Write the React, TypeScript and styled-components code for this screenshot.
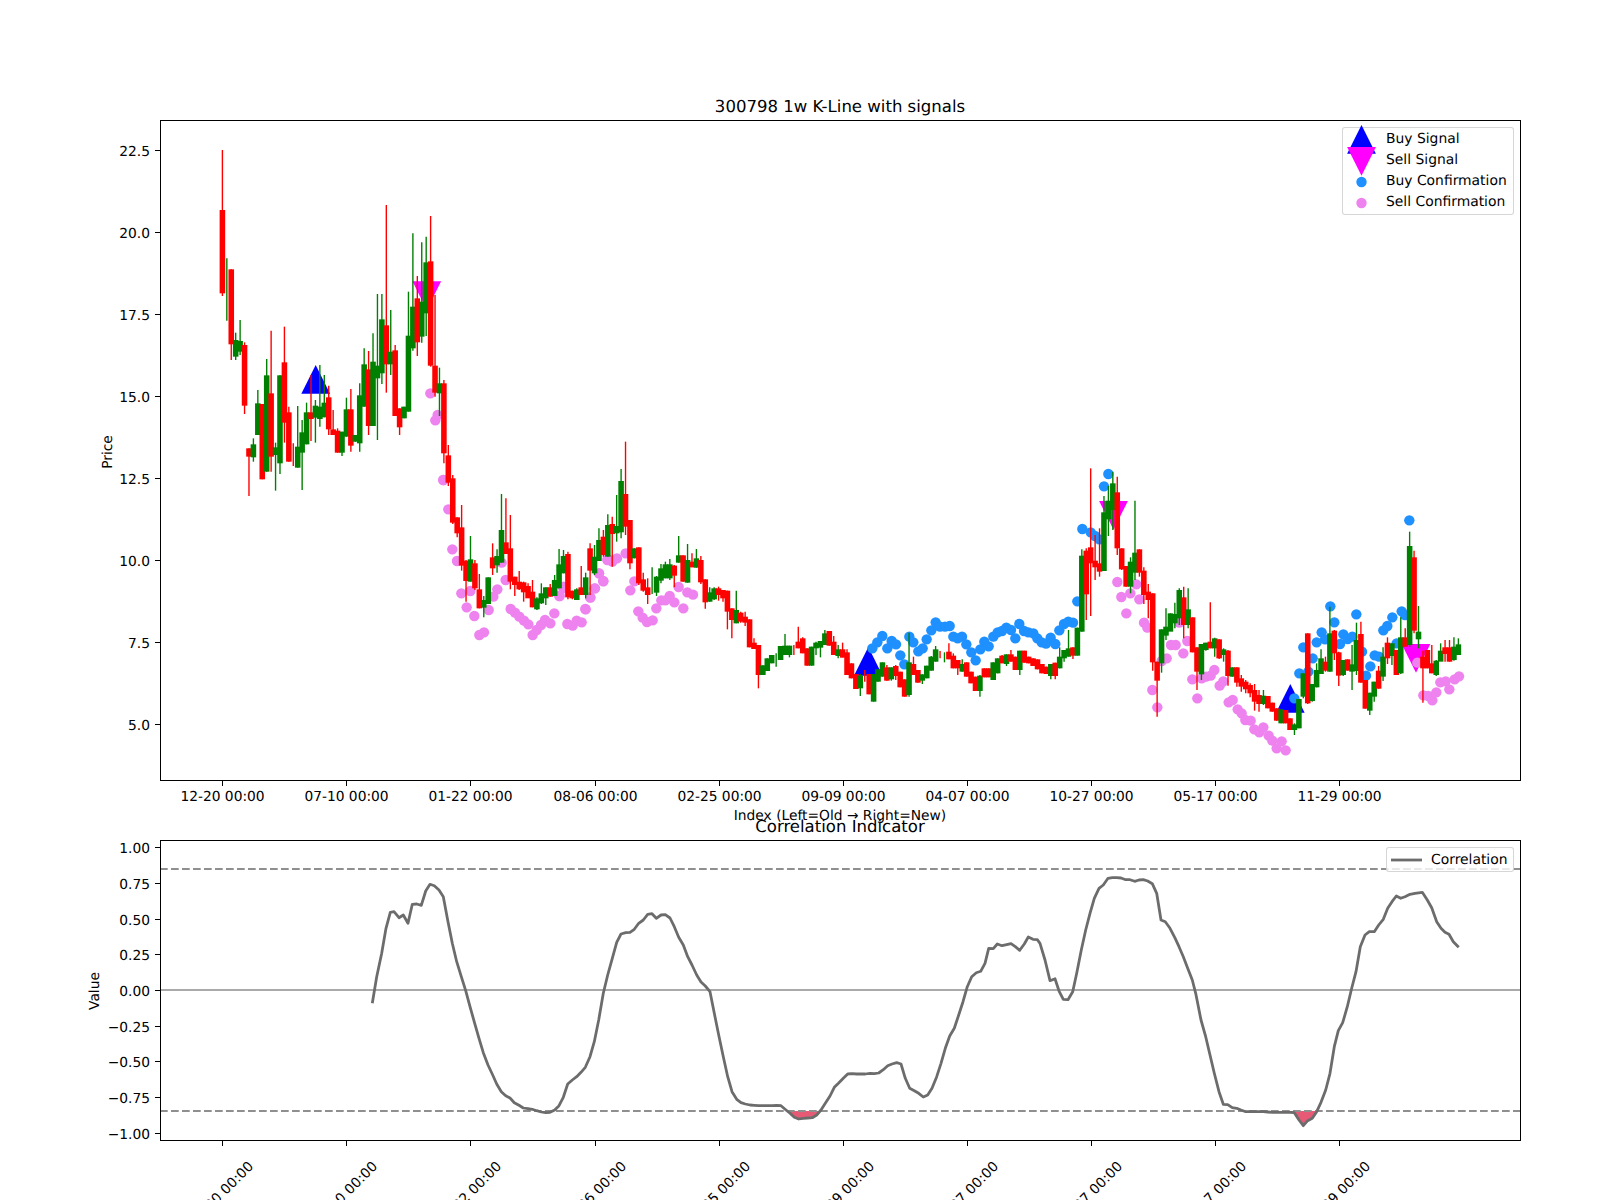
import React from 'react';
import styled, { createGlobalStyle } from 'styled-components';

const GlobalStyle = createGlobalStyle`
  html, body { margin: 0; padding: 0; background: #fff; }
`;

const FONT = `"DejaVu Sans", "Liberation Sans", sans-serif`;
const RED = '#ff0000';
const GREEN = '#008000';

const Figure = styled.div`
  width: 1600px;
  height: 1200px;
  box-sizing: border-box;
  padding: 120px 80px 60px 160px;
  display: flex;
  flex-direction: column;
  gap: 60px;
  overflow: hidden;
  background: #fff;
  font-family: ${FONT};
  text-rendering: geometricPrecision;
`;
const Axes = styled.section<{ $h: number }>`
  position: relative;
  width: 1360px;
  height: ${(p) => p.$h}px;
  flex: none;
`;
const Plot = styled.svg`
  display: block;
  width: 100%;
  height: 100%;
  overflow: visible;
`;
const TickText = styled.text`
  font-family: ${FONT};
  font-size: 13.8px;
  fill: #000;
`;
const AxisLabel = styled(TickText)`
  text-anchor: middle;
`;
const ChartTitle = styled.text`
  font-family: ${FONT};
  font-size: 16.55px;
  fill: #000;
  text-anchor: middle;
`;
const Legend = styled.div<{ $top: number; $left: number; $w: number; $h: number; $pad: number }>`
  position: absolute;
  top: ${(p) => p.$top}px;
  left: ${(p) => p.$left}px;
  width: ${(p) => p.$w}px;
  height: ${(p) => p.$h}px;
  box-sizing: border-box;
  padding-top: ${(p) => p.$pad}px;
  display: flex;
  flex-direction: column;
  border: 1px solid rgba(204, 204, 204, 0.8);
  border-radius: 3px;
  background: rgba(255, 255, 255, 0.8);
`;
const LegendRow = styled.div<{ $h: number }>`
  display: flex;
  align-items: center;
  height: ${(p) => p.$h}px;
  flex: none;
  font-size: 13.89px;
  line-height: ${(p) => p.$h}px;
  color: #000;
  white-space: nowrap;
`;
const LegendIcon = styled.svg<{ $w: number }>`
  display: block;
  width: ${(p) => p.$w}px;
  height: 20px;
  flex: none;
  overflow: visible;
`;

type Row = [number, number, number, number, number];
type Candle = { i: number; red: boolean; wt: number; wb: number; bt: number; bb: number };
const candles: Candle[] = [];
const seg = (start: number, off: number, rows: Row[]) => {
  rows.forEach((r, k) => {
    candles.push({
      i: start + k,
      red: r[0] === 1,
      wt: off + r[1] / 3,
      wb: off + r[2] / 3,
      bt: off + r[3] / 3,
      bb: off + r[4] / 3,
    });
  });
};

seg(0, 100, [
  [1,150,588,330,580],[0,475,662,0,0],[1,508,780,508,733],[0,698,780,720,770],[0,660,765,723,755],
  [1,727,942,735,917],[1,1045,1188,1045,1070],[0,1015,1085,1033,1072],[0,870,1005,910,1005],[1,912,1138,912,1138],
  [0,777,1115,826,1115],[1,692,1115,880,1070],[0,1028,1172,1042,1065],[0,826,1122,826,1090],[1,680,1028,787,968],
  [1,920,1085,937,1085],[1,1030,1098,0,0],[0,918,1103,1040,1103],[0,960,1170,997,1058],[0,908,1033,937,1033],
  [1,825,1023,937,957],[0,900,1028,917,953],[0,795,980,920,957],[0,825,952,908,952],[1,857,1005,892,988],
  [1,930,1005,988,1005],[1,985,1058,992,1058],[0,995,1068,995,1058],[0,893,1010,928,1010],[1,867,1055,928,1037],
  [0,1005,1025,1005,1025],[0,850,1055,886,1030],[0,745,920,793,920],[1,753,1005,808,978],[0,700,978,785,978],
  [0,582,1020,797,835],[0,582,852,658,820],[1,315,878,676,793],[0,630,825,755,793],[1,735,948,751,948],
  [1,925,1005,925,982],[0,920,955,920,955],[0,575,935,707,935],[0,400,752,620,745],[1,528,768,595,727],
  [0,427,728,605,710],[0,410,708,487,640],[1,348,800,484,797],[1,585,890,797,878],[0,803,948,850,880],
  [1,840,1090,850,1060],
]);
seg(51, 380, [
  [1,195,318,226,308],[1,285,432,295,428],[1,412,472,412,460],[1,375,572,442,557],[1,540,665,542,603],
  [0,468,605,538,605],[1,540,630,550,625],[1,582,685,628,685],[0,648,712,660,683],[0,592,672,592,672],
  [1,490,585,532,565],[0,508,578,528,556],[0,342,548,450,548],[1,355,522,487,522],[1,405,628,505,605],
  [1,590,648,590,615],[1,573,630,605,628],[1,605,665,607,637],[1,610,652,618,655],[1,600,682,635,682],
  [0,652,690,655,688],[0,610,672,640,670],[0,622,675,622,655],[1,612,650,622,650],[0,585,648,600,648],
  [0,507,625,553,625],[0,510,580,528,580],[1,515,658,522,652],[1,632,658,632,655],[0,625,660,628,660],
  [1,558,645,622,645],[0,578,655,592,645],[1,490,645,505,572],[0,495,585,530,580],[0,445,543,480,543],
  [1,450,530,470,525],[0,403,530,435,530],
]);
seg(88, 470, [
  [1,140,290,162,192],[0,75,215,168,190],[0,-3,205,33,187],[1,-85,195,72,170],[1,150,298,150,280],
  [0,235,265,235,265],[1,232,345,232,340],[1,308,365,328,362],[1,325,402,352,375],[0,292,372,0,0],
  [0,318,378,320,368],[0,282,340,295,332],[0,275,325,283,325],[0,267,330,283,325],[1,285,352,287,317],
  [0,198,278,256,278],[1,256,335,256,335],[0,222,338,270,338],[1,250,292,275,292],[0,237,293,265,293],
  [1,258,342,270,337],[1,328,416,328,397],[0,352,395,367,395],[0,352,390,355,388],[1,350,392,355,375],
  [1,365,395,360,385],[1,362,478,362,425],[1,415,505,415,450],[0,362,460,420,460],[1,425,458,428,455],
  [1,425,468,440,458],[1,448,532,448,532],[1,505,537,518,537],[1,525,655,525,615],[0,586,615,586,615],
  [0,565,603,565,603],[0,555,580,555,580],
]);
seg(125, 440, [[0,640,680,0,0]]);
seg(126, 580, [
  [0,198,240,198,240],[0,162,225,197,225],[0,197,232,197,225],[1,195,225,0,0],[1,140,205,185,205],
  [1,172,220,175,220],[1,205,257,205,257],[0,200,257,200,257],[0,185,225,188,205],[0,185,232,183,203],
  [0,150,195,160,195],[1,153,197,153,197],[1,168,225,185,225],[0,195,235,208,228],[1,188,232,208,233],
  [1,208,285,217,285],[1,250,295,250,295],[1,282,327,282,327],[0,282,348,287,325],[1,270,305,0,0],
  [1,282,343,282,343],[0,282,365,282,365],[0,268,305,268,305],[0,247,290,247,290],[1,255,302,262,302],
  [0,262,302,262,298],[1,255,300,258,288],[1,275,322,275,322],[1,298,350,298,350],[0,158,350,247,345],
  [1,230,285,252,285],[1,270,308,270,308],[0,283,312,283,302],[0,257,295,257,295],[0,228,272,230,272],
  [0,198,245,208,245],[1,213,235,0,0],[0,217,247,0,0],[1,190,238,215,238],[1,220,265,227,265],
  [1,240,285,240,265],[0,238,275,252,275],[1,247,290,247,290],[1,275,310,275,310],[1,290,333,290,333],
]);
seg(171, 440, [
  [0,705,770,707,753],[1,685,712,685,712],[1,685,712,685,712],[0,667,720,667,720],[0,655,700,655,700],
  [1,645,670,647,670],[0,643,678,643,672],[1,630,665,643,665],[1,650,690,650,690],[0,632,705,632,690],
  [1,632,668,632,668],[1,650,670,650,670],[1,655,678,655,678],[1,658,688,658,688],[1,672,700,672,700],
  [1,680,702,680,702],[0,672,718,672,708],[1,668,718,668,708],[0,622,685,650,685],
]);
seg(190, 460, [
  [0,570,605,570,595],[0,510,590,565,590],[1,562,597,562,587],[0,503,587,503,587],[0,268,515,287,515],
  [1,265,480,272,403],[1,25,468,262,310],[1,225,360,302,322],[1,205,350,310,335],[0,108,333,157,333],
  [0,78,228,122,178],[0,35,210,70,150],[1,50,285,97,265],[1,265,330,265,328],[1,318,380,318,380],
  [0,292,400,305,380],[0,122,360,278,338],[1,268,350,268,338],[1,322,432,332,405],[1,372,475,395,420],
  [1,400,632,400,607],[1,605,770,605,662],[0,508,638,508,610],[0,445,540,500,527],[0,460,510,460,515],
  [0,428,505,462,490],[0,385,495,390,475],[1,380,535,412,495],[0,385,505,448,495],[1,472,577,472,577],
  [1,562,690,562,635],[0,552,660,552,643],[0,548,572,548,570],[1,427,565,545,565],[0,533,590,535,565],
  [1,538,597,538,595],[0,565,605,568,585],[1,570,677,572,648],[0,622,650,622,650],[1,622,680,622,668],
  [1,645,695,655,680],[1,660,700,665,688],[1,670,712,675,700],[1,672,752,690,725],
]);
seg(234, 480, [
  [1,630,695,645,672],[0,630,675,647,672],[1,648,685,648,685],[1,668,695,668,695],[1,685,722,685,722],
  [0,688,730,688,730],[1,690,730,690,730],[1,715,750,715,750],[0,730,765,733,750],[0,657,745,657,745],
  [0,580,655,580,650],[1,460,672,460,670],[0,612,665,612,663],[0,550,622,570,622],[0,508,582,535,582],
  [1,530,575,545,572],[0,380,575,460,575],[1,450,540,452,520],[1,515,618,517,587],[0,540,588,540,585],
  [1,538,572,538,572],[0,495,630,553,575],[0,428,585,480,573],[1,425,608,462,608],[1,600,686,600,686],
  [0,638,705,638,692],[0,605,665,605,650],[1,558,626,572,626],[0,502,603,530,590],[1,472,552,488,535],
  [0,490,555,490,528],[1,510,585,510,585],[0,412,582,472,580],[1,445,500,472,500],[0,155,500,198,495],
  [1,212,460,232,452],[0,378,505,455,478],[1,512,668,530,565],[1,510,565,510,565],[1,495,580,550,580],
  [0,540,588,542,585],[0,490,542,512,545],[1,480,545,502,522],[1,480,545,502,545],[0,472,542,500,540],
  [0,475,525,493,525],
]);

const X0 = 222.4;
const DX = 4.43;
const cx = (i: number) => X0 + DX * i;

type Pt = [number, number];
const from = (ox: number, oy: number, pts: Pt[]): Pt[] => pts.map(([x, y]) => [ox + x / 3, oy + y / 3]);

const pinkDots: Pt[] = [
  ...from(140, 100, [[871,880],[893,945],[886,961],[910,1140]]),
  ...from(410, 380, [[100,300],[115,388],[127,508],[141,543],[154,640],[181,633],[170,682],[193,708],[208,765],[222,757],[236,690],[250,650],[262,628],[275,548],[287,600],[302,687],[315,698],[328,710],[342,722],[355,733],[368,765],[380,750],[393,735],[405,720],[421,730],[433,700],[448,648],[460,625],[472,732],[488,737],[500,722],[515,727],[526,687],[541,652],[554,625],[567,580],[580,603],[592,540]]),
  ...from(520, 440, [[119,468],[131,440],[197,508],[211,473],[225,445],[237,400],[250,424],[263,357],[277,365],[291,355],[317,340],[331,451],[343,424],[355,514],[368,533],[381,546],[398,541],[409,505],[424,481],[436,481],[449,468],[463,487],[476,441],[490,505],[502,457],[519,464]]),
  ...from(1060, 460, [[172,366],[184,411],[199,460],[211,400],[229,373],[238,418],[252,488],[262,503],[277,690],[292,742],[305,603],[320,595],[333,555],[347,555],[358,488],[370,580],[382,543]]),
  ...from(1180, 480, [[37,598],[52,655],[65,595],[78,590],[92,587],[103,570],[119,617],[130,604],[146,667],[158,660],[173,688],[185,700],[196,720],[212,722],[223,748],[238,757],[250,742],[266,767],[277,782],[290,805],[305,784],[317,811],[712,548],[730,646],[745,648],[757,661],[769,637],[781,607],[797,604],[808,628],[824,598],[837,589]]),
];

const blueDots: Pt[] = [
  ...from(780, 580, [[277,205],[292,187],[307,168],[322,205],[335,183],[348,193],[361,226],[373,253]]),
  ...from(900, 440, [[28,590],[40,607],[55,634],[68,625],[80,598],[94,571],[107,547],[120,560],[135,560],[149,558],[160,590],[173,595],[186,590],[199,613],[214,637],[227,661],[241,628],[253,605],[266,619],[280,590],[293,577],[306,573],[319,563],[333,570],[346,595],[358,552],[372,573],[385,577],[400,580],[412,595],[425,607],[438,611],[452,593],[466,612],[478,571],[492,552],[505,545],[519,548],[532,484],[547,267],[572,277],[585,288],[598,298],[612,139],[625,102]]),
  ...from(1180, 480, [[343,655],[358,580],[370,502],[385,575],[398,535],[410,487],[425,457],[435,478],[451,379],[463,427],[480,492],[490,463],[503,477],[517,470],[529,403],[546,515],[558,587],[571,559],[584,526],[597,530],[610,451],[622,438],[637,412],[650,490],[665,394],[675,405],[688,121]]),
];

const corrLine: Pt[] = [
  ...from(80, 780, [[877,670],[890,590],[905,520],[918,445],[931,397],[942,395],[957,413],[970,405],[984,430],[997,373],[1010,372],[1024,376],[1037,333],[1050,313],[1063,317],[1077,330],[1090,350],[1104,425],[1117,490],[1130,545],[1144,590],[1157,632],[1170,680],[1184,730],[1197,775],[1210,818],[1224,855],[1238,885],[1250,912],[1264,935],[1277,947],[1290,954],[1303,968],[1317,976],[1330,984],[1344,986],[1357,988],[1370,992],[1384,996],[1397,998],[1410,997],[1424,990],[1437,977],[1450,952]]),
  ...from(560, 780, [[23,912],[37,900],[50,890],[63,877],[76,862],[90,830],[103,785],[116,720],[130,640],[143,585],[157,535],[170,487],[183,462],[197,458],[210,457],[223,448],[236,430],[250,420],[263,403],[276,401],[289,415],[303,405],[316,404],[330,414],[343,440],[356,472],[370,495],[383,530],[396,555],[410,585],[423,606],[436,618],[450,635],[463,700],[476,765],[490,830],[503,890],[516,935],[530,958],[543,968],[556,972],[570,975],[583,976],[596,977],[610,977],[623,977],[636,977],[650,976],[663,977],[677,989],[690,1000],[703,1012],[716,1017],[730,1015],[743,1014],[757,1013],[770,1005],[783,990],[796,970],[810,948],[823,922],[836,909],[850,895],[863,882],[876,881],[890,882],[903,882],[916,882],[930,880],[943,881],[956,879],[970,869],[983,857],[996,852],[1010,848],[1023,852],[1036,895],[1049,925],[1063,932],[1076,940],[1090,951],[1103,945],[1116,925],[1130,890],[1143,850],[1156,805],[1169,768],[1183,745],[1196,705],[1209,665],[1222,620],[1235,590],[1249,578],[1262,574],[1275,550],[1286,505],[1300,506],[1312,492],[1326,497],[1340,494],[1353,491],[1366,500],[1379,511],[1393,492],[1405,471],[1419,478],[1432,479]]),
  ...from(1040, 780, [[0,490],[15,540],[30,602],[45,596],[58,635],[70,658],[84,659],[98,635],[110,580],[124,510],[137,450],[150,400],[163,355],[177,325],[190,315],[204,295],[217,293],[230,293],[243,294],[257,299],[270,299],[284,304],[297,300],[310,299],[323,303],[337,311],[350,340],[363,420],[376,425],[390,445],[404,472],[417,500],[430,530],[443,565],[457,600],[467,640],[483,720],[497,770],[510,825],[523,880],[537,935],[550,973],[563,974],[577,983],[590,985],[603,990],[617,995],[630,995],[643,995],[657,995],[670,995],[683,996],[697,997],[710,997],[723,997],[737,997],[750,997],[763,998],[777,1020],[790,1037],[803,1022],[817,1015],[830,995],[843,967],[857,930],[870,880],[883,800],[895,752],[908,728],[922,680],[935,625],[948,575],[961,500],[975,465],[988,455],[1003,455],[1016,435],[1030,418],[1043,385],[1056,365],[1069,348],[1082,355],[1095,350],[1110,343],[1125,340],[1147,337],[1162,360],[1175,383],[1190,425],[1203,445],[1215,457],[1227,463],[1240,485],[1256,502]]),
];

const linePoints = corrLine.map(([x, y]) => `${x.toFixed(1)},${y.toFixed(1)}`).join(' ');
const fillPoints = `${corrLine[0][0]},1111 ${linePoints} ${corrLine[corrLine.length - 1][0]},1111`;

const xLabels = ['12-20 00:00','07-10 00:00','01-22 00:00','08-06 00:00','02-25 00:00','09-09 00:00','04-07 00:00','10-27 00:00','05-17 00:00','11-29 00:00'];
const xTicks = xLabels.map((label, k) => ({ label, x: Math.round(X0 + 124.04 * k) + 0.5 }));
const priceTicks = ['5.0','7.5','10.0','12.5','15.0','17.5','20.0','22.5'].map((label) => ({
  label,
  y: Math.round(232.3 + (20 - Number(label)) * 32.8) + 0.5,
}));
const corrTicks = [-1, -0.75, -0.5, -0.25, 0, 0.25, 0.5, 0.75, 1].map((v) => ({
  label: (v < 0 ? '\u2212' : '') + Math.abs(v).toFixed(2),
  y: Math.round(990 - v * 142.8) + 0.5,
}));

const upTri = (x: number, top: number, s = 28.7) => `${x},${top} ${x + s / 2},${top + s} ${x - s / 2},${top + s}`;
const downTri = (x: number, top: number, s = 28.7) => `${x - s / 2},${top} ${x + s / 2},${top} ${x},${top + s}`;

const YAxis: React.FC<{ ticks: { label: string; y: number }[] }> = ({ ticks }) => (
  <>
    {ticks.map((t) => (
      <g key={t.label}>
        <line x1={155} x2={160} y1={t.y} y2={t.y} stroke="#000" strokeWidth={1} />
        <TickText x={150} y={t.y + 5.1} textAnchor="end">{t.label}</TickText>
      </g>
    ))}
  </>
);

const PriceChart = () => (
  <Plot viewBox="160 120 1360 660">
    <polygon points={upTri(315.7, 365)} fill="#0000ff" />
    <polygon points={upTri(868.3, 647)} fill="#0000ff" />
    <polygon points={upTri(1290.3, 684)} fill="#0000ff" />
    <polygon points={downTri(426.8, 281.3)} fill="#ff00ff" />
    <polygon points={downTri(1113.5, 501)} fill="#ff00ff" />
    <polygon points={downTri(1416, 644)} fill="#ff00ff" />
    {pinkDots.map(([x, y], k) => <circle key={`p${k}`} cx={x} cy={y} r={5.2} fill="#ee82ee" />)}
    {blueDots.map(([x, y], k) => <circle key={`b${k}`} cx={x} cy={y} r={5.2} fill="#1e90ff" />)}
    {candles.map((c) => {
      const col = c.red ? RED : GREEN;
      const x = cx(c.i);
      return (
        <g key={c.i}>
          <line x1={x} x2={x} y1={c.wt} y2={c.wb} stroke={col} strokeWidth={1.39} />
          {c.bb > c.bt && <rect x={x - 2.78} y={c.bt} width={5.56} height={c.bb - c.bt} fill={col} />}
        </g>
      );
    })}
    <rect x={160.5} y={120.5} width={1360} height={660} fill="none" stroke="#000" strokeWidth={1} />
    <YAxis ticks={priceTicks} />
    {xTicks.map((t) => (
      <g key={t.label}>
        <line x1={t.x} x2={t.x} y1={781} y2={786} stroke="#000" strokeWidth={1} />
        <AxisLabel x={t.x} y={801}>{t.label}</AxisLabel>
      </g>
    ))}
    <AxisLabel x={840} y={820}>Index (Left=Old → Right=New)</AxisLabel>
    <AxisLabel x={111.5} y={452} transform="rotate(-90 111.5 452)">Price</AxisLabel>
    <ChartTitle x={840} y={112}>300798 1w K-Line with signals</ChartTitle>
  </Plot>
);

const CorrChart = () => (
  <Plot viewBox="160 840 1360 300">
    <defs>
      <clipPath id="belowBand">
        <rect x={160} y={1111} width={1360} height={30} />
      </clipPath>
    </defs>
    <polygon points={fillPoints} fill="#dc143c" fillOpacity={0.7} clipPath="url(#belowBand)" />
    <line x1={160} x2={1520} y1={990} y2={990} stroke="#aaaaaa" strokeWidth={2} />
    <line x1={160} x2={1520} y1={869} y2={869} stroke="#8f8f8f" strokeWidth={2} strokeDasharray="7.7 3.3" />
    <line x1={160} x2={1520} y1={1111} y2={1111} stroke="#8f8f8f" strokeWidth={2} strokeDasharray="7.7 3.3" />
    <polyline points={linePoints} fill="none" stroke="#6c6c6c" strokeWidth={2.78} strokeLinejoin="round" />
    <rect x={160.5} y={840.5} width={1360} height={300} fill="none" stroke="#000" strokeWidth={1} />
    <YAxis ticks={corrTicks} />
    {xTicks.map((t) => (
      <g key={t.label}>
        <line x1={t.x} x2={t.x} y1={1141} y2={1146} stroke="#000" strokeWidth={1} />
        <AxisLabel x={t.x - 1} y={1194} dominantBaseline="central" transform={`rotate(-45 ${t.x - 1} 1194)`}>{t.label}</AxisLabel>
      </g>
    ))}
    <AxisLabel x={99} y={991} transform="rotate(-90 99 991)">Value</AxisLabel>
    <ChartTitle x={840} y={832}>Correlation Indicator</ChartTitle>
  </Plot>
);

const App: React.FC = () => (
  <>
    <GlobalStyle />
    <Figure>
      <Axes $h={660}>
        <PriceChart />
        <Legend $top={7} $left={1182} $w={172} $h={88} $pad={1}>
          <LegendRow $h={21}>
            <LegendIcon $w={43} viewBox="0 0 43 20">
              <polygon points={upTri(18.5, -5)} fill="#0000ff" />
            </LegendIcon>
            Buy Signal
          </LegendRow>
          <LegendRow $h={21}>
            <LegendIcon $w={43} viewBox="0 0 43 20">
              <polygon points={downTri(18.5, -4)} fill="#ff00ff" />
            </LegendIcon>
            Sell Signal
          </LegendRow>
          <LegendRow $h={21}>
            <LegendIcon $w={43} viewBox="0 0 43 20">
              <circle cx={18.5} cy={10} r={5.2} fill="#1e90ff" />
            </LegendIcon>
            Buy Confirmation
          </LegendRow>
          <LegendRow $h={21}>
            <LegendIcon $w={43} viewBox="0 0 43 20">
              <circle cx={18.5} cy={10} r={5.2} fill="#ee82ee" />
            </LegendIcon>
            Sell Confirmation
          </LegendRow>
        </Legend>
      </Axes>
      <Axes $h={300}>
        <CorrChart />
        <Legend $top={7} $left={1226} $w={128} $h={25} $pad={0.5}>
          <LegendRow $h={23}>
            <LegendIcon $w={44} viewBox="0 0 44 20">
              <line x1={4} x2={35} y1={10} y2={10} stroke="#6c6c6c" strokeWidth={2.78} />
            </LegendIcon>
            Correlation
          </LegendRow>
        </Legend>
      </Axes>
    </Figure>
  </>
);

export default App;
